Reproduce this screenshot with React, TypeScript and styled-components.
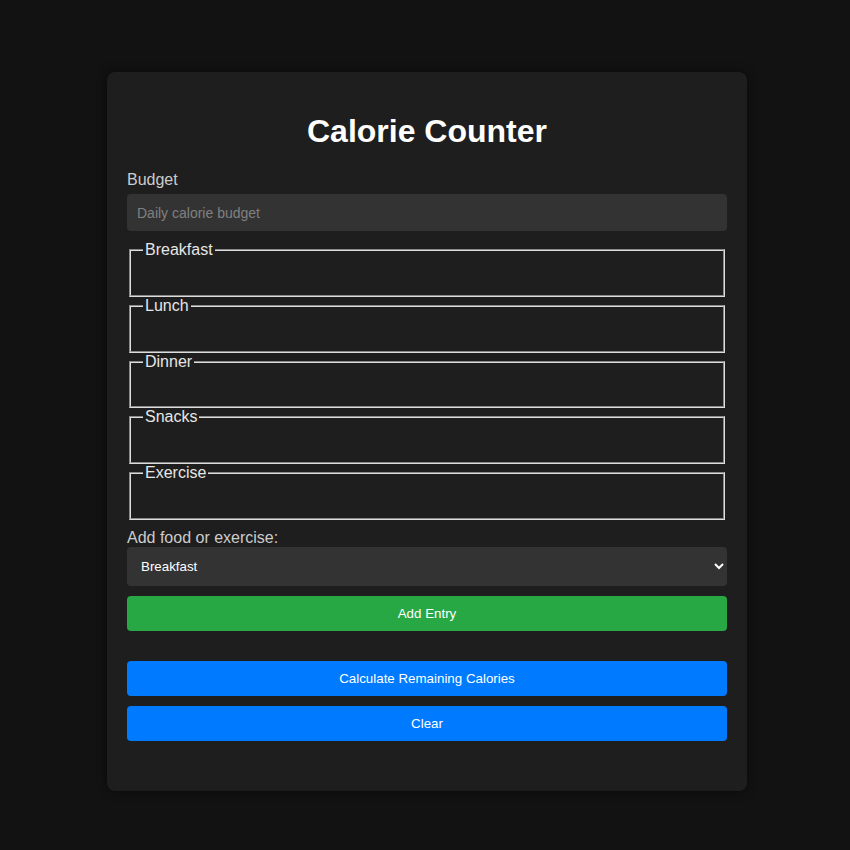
import React from "react";
import styled, { createGlobalStyle } from "styled-components";

const GlobalStyle = createGlobalStyle`
  html, body {
    margin: 0;
    padding: 0;
    background: #121212;
    font-family: "Liberation Sans", Arial, sans-serif;
    color: #e0e0e0;
  }
`;

const Page = styled.div`
  display: flex;
  justify-content: center;
  padding: 72px 0 40px 4px;
`;

const Card = styled.div`
  width: 600px;
  background: #1e1e1e;
  border-radius: 8px;
  box-shadow: 0 0 10px rgba(0, 0, 0, 0.5);
  padding: 20px 20px 50px;
`;

const Title = styled.h1`
  margin: 21px 0 21px;
  font-size: 32px;
  line-height: 37px;
  text-align: center;
  color: #ffffff;
  font-weight: bold;
`;

const Label = styled.label`
  display: block;
  font-size: 16px;
  line-height: 18px;
  color: #cccccc;
`;

const BudgetInput = styled.input`
  display: block;
  width: 100%;
  box-sizing: border-box;
  margin: 5px 0 10px;
  height: 37px;
  padding: 0 10px;
  border: none;
  border-radius: 4px;
  background: #333333;
  color: #ffffff;
  font-family: "Liberation Sans", Arial, sans-serif;
  font-size: 14px;
  outline: none;
  &::placeholder {
    color: #808080;
  }
`;

const Group = styled.fieldset`
  margin: 0 2px;
  padding: 0 12px 0;
  min-height: 0;
  height: 55.75px;
  box-sizing: border-box;
  border: 2px groove #dddddd;
  color: #e0e0e0;
  &:last-of-type {
    margin-bottom: 9px;
  }
`;

const Legend = styled.legend`
  padding: 0 2px;
  font-size: 16px;
  line-height: 18px;
  color: #e6e6e6;
`;

const Select = styled.select`
  display: block;
  width: 100%;
  height: 39px;
  padding: 0 10px;
  border: none;
  border-radius: 4px;
  background: #333333;
  color: #ffffff;
  color-scheme: dark;
  font-family: "Liberation Sans", Arial, sans-serif;
  font-size: 13.33px;
  outline: none;
`;

const Button = styled.button<{ $variant: "green" | "blue"; $top: number }>`
  display: block;
  width: 100%;
  height: 35px;
  margin-top: ${(p) => p.$top}px;
  border: none;
  border-radius: 4px;
  background: ${(p) => (p.$variant === "green" ? "#28a745" : "#007bff")};
  color: #ffffff;
  font-family: "Liberation Sans", Arial, sans-serif;
  font-size: 13.33px;
  cursor: pointer;
`;

const groups = ["Breakfast", "Lunch", "Dinner", "Snacks", "Exercise"];

export default function App() {
  return (
    <>
      <GlobalStyle />
      <Page>
        <Card>
          <Title>Calorie Counter</Title>
          <Label htmlFor="budget">Budget</Label>
          <BudgetInput id="budget" type="number" placeholder="Daily calorie budget" />
          {groups.map((g) => (
            <Group key={g}>
              <Legend>{g}</Legend>
            </Group>
          ))}
          <Label htmlFor="entry-dropdown">Add food or exercise:</Label>
          <Select id="entry-dropdown" defaultValue="breakfast">
            {groups.map((g) => (
              <option key={g} value={g.toLowerCase()}>
                {g}
              </option>
            ))}
          </Select>
          <Button $variant="green" $top={10}>Add Entry</Button>
          <Button $variant="blue" $top={30}>Calculate Remaining Calories</Button>
          <Button $variant="blue" $top={10}>Clear</Button>
        </Card>
      </Page>
    </>
  );
}
